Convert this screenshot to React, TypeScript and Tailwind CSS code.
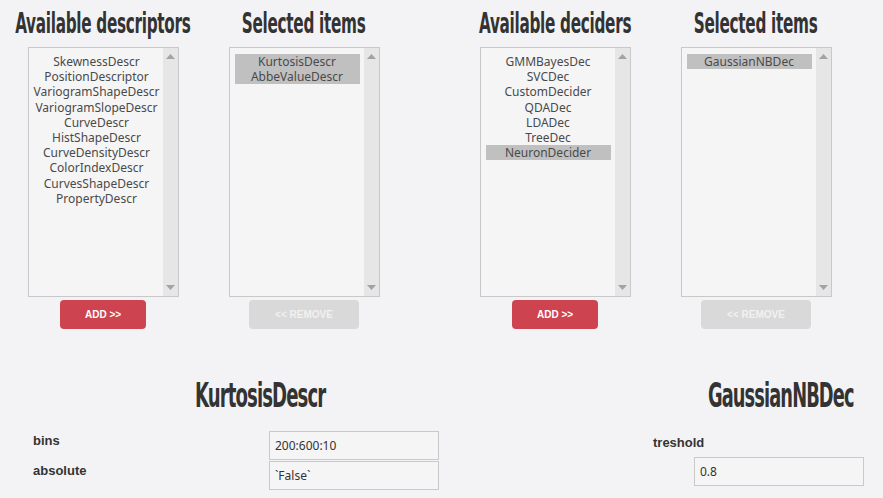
import React from 'react'

const headFont = "font-['Liberation_Sans_Narrow','DejaVu_Sans_Condensed',sans-serif]"
const listFont = "font-['Noto_Sans','Open_Sans',sans-serif]"

function Arrow({ up }: { up?: boolean }) {
  return (
    <svg width="9" height="5" viewBox="0 0 9 5" className="mx-auto">
      <path d={up ? 'M0 5 L4.5 0 L9 5 Z' : 'M0 0 L9 0 L4.5 5 Z'} fill="#a3a3a3" />
    </svg>
  )
}

function ListBox({ items, selected = [] }: { items: string[]; selected?: string[] }) {
  return (
    <div className="flex h-[250px] w-[151px] border border-[#c8c8c8] bg-[#f5f5f6]">
      <div className={`flex-1 pl-[5px] pr-[4px] pt-[6px] text-center text-[12px] leading-[15.2px] text-[#4a4a4a] ${listFont}`}>
        {items.map((it) => (
          <div key={it} className={selected.includes(it) ? 'bg-[#c0c0c0]' : ''}>
            {it}
          </div>
        ))}
      </div>
      <div className="flex w-[15px] flex-col justify-between bg-[#e6e6e6] py-[6px]">
        <Arrow up />
        <Arrow />
      </div>
    </div>
  )
}

function Column({
  title,
  items,
  selected,
  button,
}: {
  title: string
  items: string[]
  selected?: string[]
  button: 'add' | 'remove'
}) {
  return (
    <div className="flex w-[200px] flex-col items-center">
      <h2 className={`flex h-[47px] w-full justify-center whitespace-nowrap pt-[6px] text-[29px] leading-[34px] font-bold tracking-[-0.5px] text-[#333] ${headFont}`}>
        <span className="inline-block origin-center scale-x-[0.585]">{title}</span>
      </h2>
      <ListBox items={items} selected={selected} />
      {button === 'add' ? (
        <button className="mt-[3px] h-[29px] w-[86px] rounded-[4px] bg-[#cd4450] font-['Liberation_Sans',sans-serif] text-[10px] font-bold text-white">
          ADD &gt;&gt;
        </button>
      ) : (
        <button className="mt-[3px] h-[29px] w-[110px] rounded-[4px] bg-[#d9d9da] font-['Liberation_Sans',sans-serif] text-[10px] font-bold text-[#f1f1f1]">
          &lt;&lt; REMOVE
        </button>
      )}
    </div>
  )
}

function Field({ value, className = '' }: { value: string; className?: string }) {
  return (
    <div
      className={`flex h-[29px] w-[170px] items-center border border-[#c9c9c9] bg-[#f5f5f6] px-[5px] text-[12px] text-[#333] ${listFont} ${className}`}
    >
      {value}
    </div>
  )
}

export default function App() {
  const descriptors = [
    'SkewnessDescr',
    'PositionDescriptor',
    'VariogramShapeDescr',
    'VariogramSlopeDescr',
    'CurveDescr',
    'HistShapeDescr',
    'CurveDensityDescr',
    'ColorIndexDescr',
    'CurvesShapeDescr',
    'PropertyDescr',
  ]
  const deciders = ['GMMBayesDec', 'SVCDec', 'CustomDecider', 'QDADec', 'LDADec', 'TreeDec', 'NeuronDecider']
  const label = "font-['Liberation_Sans',sans-serif] text-[13px] leading-[15px] font-bold text-[#333]"
  const bigHead = `whitespace-nowrap text-[33px] leading-[40px] font-bold tracking-[-1.5px] text-[#333] ${headFont}`

  return (
    <div className="h-[498px] w-[883px] overflow-hidden bg-[#f3f3f5]">
      <div className="flex pl-[3px]">
        <div className="flex gap-[1px]">
          <Column title="Available descriptors" items={descriptors} button="add" />
          <Column title="Selected items" items={['KurtosisDescr', 'AbbeValueDescr']} selected={['KurtosisDescr', 'AbbeValueDescr']} button="remove" />
        </div>
        <div className="ml-[51px] flex gap-[1px]">
          <Column title="Available deciders" items={deciders} selected={['NeuronDecider']} button="add" />
          <Column title="Selected items" items={['GaussianNBDec']} selected={['GaussianNBDec']} button="remove" />
        </div>
      </div>

      <div className="mt-[47px] flex">
        <div className="w-[441px]">
          <h3 className={`pl-[195px] ${bigHead}`}>
            <span className="inline-block origin-left scale-x-[0.61]">KurtosisDescr</span>
          </h3>
          <div className="mt-[15px] flex flex-col gap-[1px] pl-[33px]">
            <div className="flex items-start">
              <span className={`w-[236px] pt-[2px] ${label}`}>bins</span>
              <Field value="200:600:10" />
            </div>
            <div className="flex items-start">
              <span className={`w-[236px] pt-[2px] ${label}`}>absolute</span>
              <Field value="`False`" />
            </div>
          </div>
        </div>
        <div className="flex-1">
          <h3 className={`pl-[269px] ${bigHead}`}>
            <span className="inline-block origin-left scale-x-[0.6]">GaussianNBDec</span>
          </h3>
          <div className="mt-[19px] pl-[214px]">
            <div className={label}>treshold</div>
            <Field value="0.8" className="mt-[7px] ml-[41px]" />
          </div>
        </div>
      </div>
    </div>
  )
}
